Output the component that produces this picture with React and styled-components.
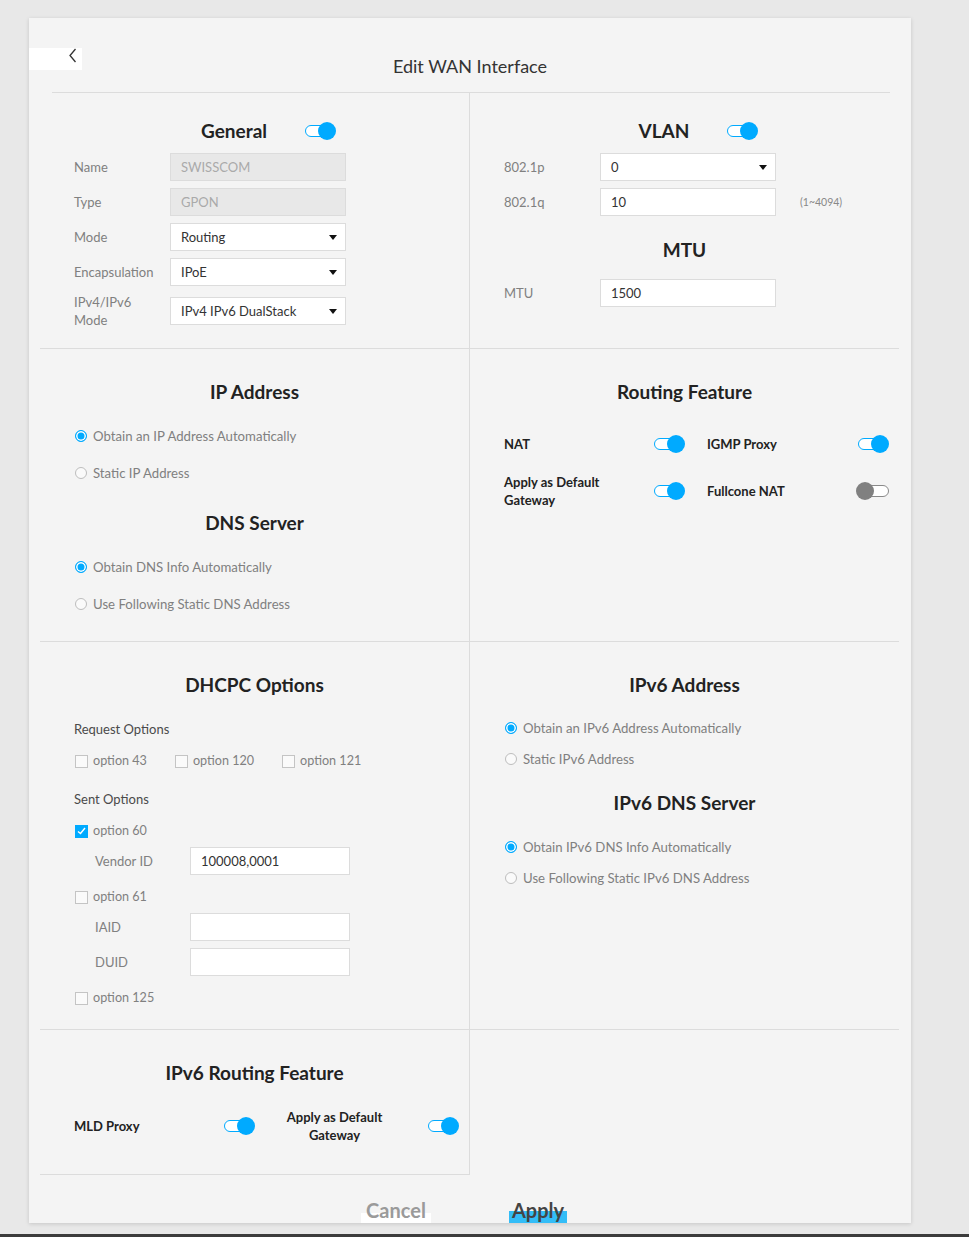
import React from 'react'
import styled, { createGlobalStyle } from 'styled-components'

const GlobalStyle = createGlobalStyle`
  body {
    margin: 0;
    background: #e8e8e8;
    font-family: Lato, "Noto Sans", sans-serif;
  }
`

const blue = '#00aaff'

const Page = styled.div`
  display: flex;
  flex-direction: column;
`

const Card = styled.div`
  box-sizing: border-box;
  margin: 18px 0 0 29px;
  width: 882px;
  height: 1205px;
  padding-top: 30px;
  background: #f4f4f4;
  box-shadow: 0 1px 4px rgba(0, 0, 0, 0.15);
  overflow: hidden;
  display: flex;
  flex-direction: column;
`

const BottomBar = styled.div`
  margin-top: 11px;
  height: 3px;
  background: #3c3c3c;
`

const Header = styled.div`
  display: flex;
  align-items: flex-start;
`

const BackButton = styled.button`
  box-sizing: border-box;
  width: 53px;
  height: 22px;
  border: 0;
  padding: 0 4px 0 0;
  background: #fff;
  display: flex;
  justify-content: flex-end;
  align-items: flex-start;
  cursor: pointer;
`

const Title = styled.h1`
  flex: 1;
  margin: 8px 53px 0 0;
  text-align: center;
  font-size: 18px;
  line-height: 20px;
  font-weight: 400;
  color: #333;
`

const Divider = styled.div`
  margin: 16px 21px 0 23px;
  border-top: 1px solid #dcdcdc;
`

const Grid = styled.div`
  margin: 0 12px 0 11px;
  display: grid;
  grid-template-columns: 430px 429px;
  grid-template-rows: 256px 293px 388px 145px;
`

const Cell = styled.div`
  box-sizing: border-box;
  padding: ${p => p.$pt || 31}px 34px 0;
  display: flex;
  flex-direction: column;
  border-right: ${p => (p.$left ? '1px solid #dcdcdc' : '0')};
  border-bottom: ${p => (p.$noBottom ? '0' : '1px solid #dcdcdc')};
`

const Heading = styled.h3`
  margin: ${p => p.$mt || 0}px 0 0;
  text-align: center;
  font-size: 19px;
  line-height: 24px;
  font-weight: 700;
  color: #222;
`

const HeadingRow = styled.div`
  display: flex;
  justify-content: center;
  align-items: center;
  gap: 38px;
  padding-left: 28px;
  & > h3 { margin: 0; }
`

const FormRow = styled.div`
  display: flex;
  align-items: center;
  min-height: 28px;
  margin-top: ${p => p.$mt || 7}px;
  padding-left: ${p => p.$indent || 0}px;
`

const FieldLabel = styled.label`
  width: ${p => p.$w || 96}px;
  flex-shrink: 0;
  font-size: 13px;
  line-height: 18px;
  color: #808080;
`

const TextInput = styled.input`
  box-sizing: border-box;
  width: ${p => p.$w || 176}px;
  height: 28px;
  padding: 0 10px;
  border: 1px solid #dcdcdc;
  background: ${p => (p.disabled ? '#e8e8e8' : '#fff')};
  color: ${p => (p.disabled ? '#aaa' : '#333')};
  font-family: inherit;
  font-size: 13px;
  outline: none;
`

const Select = styled.div`
  box-sizing: border-box;
  position: relative;
  width: 176px;
  height: 28px;
  padding: 0 10px;
  border: 1px solid #dcdcdc;
  background: #fff;
  color: #333;
  font-size: 13px;
  display: flex;
  align-items: center;

  &::after {
    content: '';
    position: absolute;
    right: 8px;
    top: 11px;
    border-left: 4px solid transparent;
    border-right: 4px solid transparent;
    border-top: 5px solid #111;
  }
`

const Hint = styled.span`
  margin-left: 24px;
  font-size: 10.5px;
  color: #888;
`

const RadioRow = styled.label`
  display: flex;
  align-items: center;
  gap: 6px;
  margin-top: ${p => p.$mt || 0}px;
  line-height: 18px;
  font-size: 13.2px;
  color: #808080;
`

const RadioDot = styled.span`
  box-sizing: border-box;
  margin-left: 1px;
  width: 12px;
  height: 12px;
  border-radius: 50%;
  border: 1px solid ${p => (p.$on ? blue : '#bdbdbd')};
  background: ${p => (p.$on ? blue : '#fafafa')};
  box-shadow: ${p => (p.$on ? 'inset 0 0 0 1.5px #fff' : 'none')};
`

const SubLabel = styled.div`
  margin-top: ${p => p.$mt || 0}px;
  line-height: 18px;
  font-size: 13px;
  color: #4a4a4a;
`

const CheckRow = styled.div`
  display: flex;
  gap: 27px;
  margin-top: ${p => p.$mt || 0}px;
`

const CheckItem = styled.label`
  display: flex;
  align-items: center;
  gap: 5px;
  margin-top: ${p => p.$mt || 0}px;
  line-height: 18px;
  font-size: 12.6px;
  color: #808080;
`

const CheckBox = styled.span`
  box-sizing: border-box;
  margin-left: 1px;
  width: 13px;
  height: 13px;
  border: 1px solid ${p => (p.$on ? blue : '#c4c4c4')};
  background: ${p => (p.$on ? blue : '#fafafa')};
  display: flex;
  align-items: center;
  justify-content: center;
`

const ToggleGrid = styled.div`
  display: grid;
  grid-template-columns: 181px 182px;
  column-gap: 22px;
  row-gap: 20px;
  align-items: center;
  margin-top: ${p => p.$mt || 0}px;
`

const ToggleCell = styled.div`
  display: flex;
  justify-content: space-between;
  align-items: center;
`

const ToggleLabel = styled.span`
  width: ${p => p.$w || 110}px;
  text-align: ${p => p.$align || 'left'};
  font-size: 13px;
  line-height: 18px;
  font-weight: 700;
  color: #222;
`

const Switch = styled.span`
  position: relative;
  flex-shrink: 0;
  display: inline-block;
  width: ${p => (p.$on ? 31 : 33)}px;
  height: 18px;

  &::before {
    content: '';
    position: absolute;
    box-sizing: border-box;
    top: 3px;
    left: ${p => (p.$on ? 0 : 4)}px;
    right: ${p => (p.$on ? 3 : 0)}px;
    height: 12px;
    border-radius: 6px;
    border: 1.5px solid ${p => (p.$on ? blue : '#8a8a8a')};
    background: #fff;
  }

  &::after {
    content: '';
    position: absolute;
    top: 0;
    left: ${p => (p.$on ? 13 : 0)}px;
    width: 18px;
    height: 18px;
    border-radius: 50%;
    background: ${p => (p.$on ? blue : '#808080')};
  }
`

const Footer = styled.div`
  display: flex;
  justify-content: center;
  align-items: flex-start;
  gap: 78px;
  padding: 22px 12px 0 0;
`

const ActionButton = styled.button`
  width: ${p => p.$w}px;
  height: 26px;
  padding: 0;
  border: 0;
  font-family: inherit;
  font-size: 20px;
  line-height: 26px;
  font-weight: 700;
  color: ${p => (p.$primary ? '#444' : '#9a9a9a')};
  background: ${p =>
    p.$primary
      ? 'linear-gradient(transparent 54%, #33bdf7 54%)'
      : 'linear-gradient(transparent 62%, #fff 62%)'};
`

const Radio = ({ on, children, mt }) => (
  <RadioRow $mt={mt}>
    <RadioDot $on={on} />
    {children}
  </RadioRow>
)

const Check = ({ on, children, mt }) => (
  <CheckItem $mt={mt}>
    <CheckBox $on={on}>
      {on && (
        <svg width="9" height="8" viewBox="0 0 9 8">
          <polyline points="1,4.5 3.5,6.5 8,1" fill="none" stroke="#fff" strokeWidth="1.4" />
        </svg>
      )}
    </CheckBox>
    {children}
  </CheckItem>
)

const Field = ({ label, children, mt }) => (
  <FormRow $mt={mt}>
    <FieldLabel>{label}</FieldLabel>
    {children}
  </FormRow>
)

export default function App() {
  return (
    <Page>
      <GlobalStyle />
      <Card>
        <Header>
          <BackButton aria-label="Back">
            <svg width="10" height="16" viewBox="0 0 10 16">
              <polyline points="7.5,1 2,7.5 7.5,14" fill="none" stroke="#333" strokeWidth="1.3" />
            </svg>
          </BackButton>
          <Title>Edit WAN Interface</Title>
        </Header>
        <Divider />

        <Grid>
          <Cell $left $pt={26}>
            <HeadingRow>
              <Heading>General</Heading>
              <Switch $on />
            </HeadingRow>
            <Field label="Name" mt={10}>
              <TextInput disabled value="SWISSCOM" readOnly />
            </Field>
            <Field label="Type">
              <TextInput disabled value="GPON" readOnly />
            </Field>
            <Field label="Mode">
              <Select>Routing</Select>
            </Field>
            <Field label="Encapsulation">
              <Select>IPoE</Select>
            </Field>
            <Field label={<>IPv4/IPv6<br />Mode</>}>
              <Select>IPv4 IPv6 DualStack</Select>
            </Field>
          </Cell>

          <Cell $pt={26}>
            <HeadingRow>
              <Heading>VLAN</Heading>
              <Switch $on />
            </HeadingRow>
            <Field label="802.1p" mt={10}>
              <Select>0</Select>
            </Field>
            <Field label="802.1q">
              <TextInput value="10" readOnly />
              <Hint>(1~4094)</Hint>
            </Field>
            <Heading $mt={22}>MTU</Heading>
            <Field label="MTU" mt={17}>
              <TextInput value="1500" readOnly />
            </Field>
          </Cell>

          <Cell $left>
            <Heading>IP Address</Heading>
            <Radio on mt={23}>Obtain an IP Address Automatically</Radio>
            <Radio mt={19}>Static IP Address</Radio>
            <Heading $mt={29}>DNS Server</Heading>
            <Radio on mt={23}>Obtain DNS Info Automatically</Radio>
            <Radio mt={19}>Use Following Static DNS Address</Radio>
          </Cell>

          <Cell>
            <Heading>Routing Feature</Heading>
            <ToggleGrid $mt={31}>
              <ToggleCell>
                <ToggleLabel>NAT</ToggleLabel>
                <Switch $on />
              </ToggleCell>
              <ToggleCell>
                <ToggleLabel>IGMP Proxy</ToggleLabel>
                <Switch $on />
              </ToggleCell>
              <ToggleCell>
                <ToggleLabel $w={104}>Apply as Default Gateway</ToggleLabel>
                <Switch $on />
              </ToggleCell>
              <ToggleCell>
                <ToggleLabel>Fullcone NAT</ToggleLabel>
                <Switch />
              </ToggleCell>
            </ToggleGrid>
          </Cell>

          <Cell $left>
            <Heading>DHCPC Options</Heading>
            <SubLabel $mt={23}>Request Options</SubLabel>
            <CheckRow $mt={14}>
              <Check>option 43</Check>
              <Check>option 120</Check>
              <Check>option 121</Check>
            </CheckRow>
            <SubLabel $mt={20}>Sent Options</SubLabel>
            <Check on mt={14}>option 60</Check>
            <FormRow $indent={21}>
              <FieldLabel $w={95}>Vendor ID</FieldLabel>
              <TextInput $w={160} value="100008,0001" readOnly />
            </FormRow>
            <Check mt={13}>option 61</Check>
            <FormRow $indent={21}>
              <FieldLabel $w={95}>IAID</FieldLabel>
              <TextInput $w={160} value="" readOnly />
            </FormRow>
            <FormRow $indent={21}>
              <FieldLabel $w={95}>DUID</FieldLabel>
              <TextInput $w={160} value="" readOnly />
            </FormRow>
            <Check mt={13}>option 125</Check>
          </Cell>

          <Cell>
            <Heading>IPv6 Address</Heading>
            <Radio on mt={22}>Obtain an IPv6 Address Automatically</Radio>
            <Radio mt={13}>Static IPv6 Address</Radio>
            <Heading $mt={23}>IPv6 DNS Server</Heading>
            <Radio on mt={23}>Obtain IPv6 DNS Info Automatically</Radio>
            <Radio mt={13}>Use Following Static IPv6 DNS Address</Radio>
          </Cell>

          <Cell $left>
            <Heading>IPv6 Routing Feature</Heading>
            <ToggleGrid $mt={23}>
              <ToggleCell>
                <ToggleLabel>MLD Proxy</ToggleLabel>
                <Switch $on />
              </ToggleCell>
              <ToggleCell>
                <ToggleLabel $w={115} $align="center">Apply as Default Gateway</ToggleLabel>
                <Switch $on />
              </ToggleCell>
            </ToggleGrid>
          </Cell>

          <Cell $noBottom />
        </Grid>

        <Footer>
          <ActionButton $w={70}>Cancel</ActionButton>
          <ActionButton $w={58} $primary>Apply</ActionButton>
        </Footer>
      </Card>
      <BottomBar />
    </Page>
  )
}
